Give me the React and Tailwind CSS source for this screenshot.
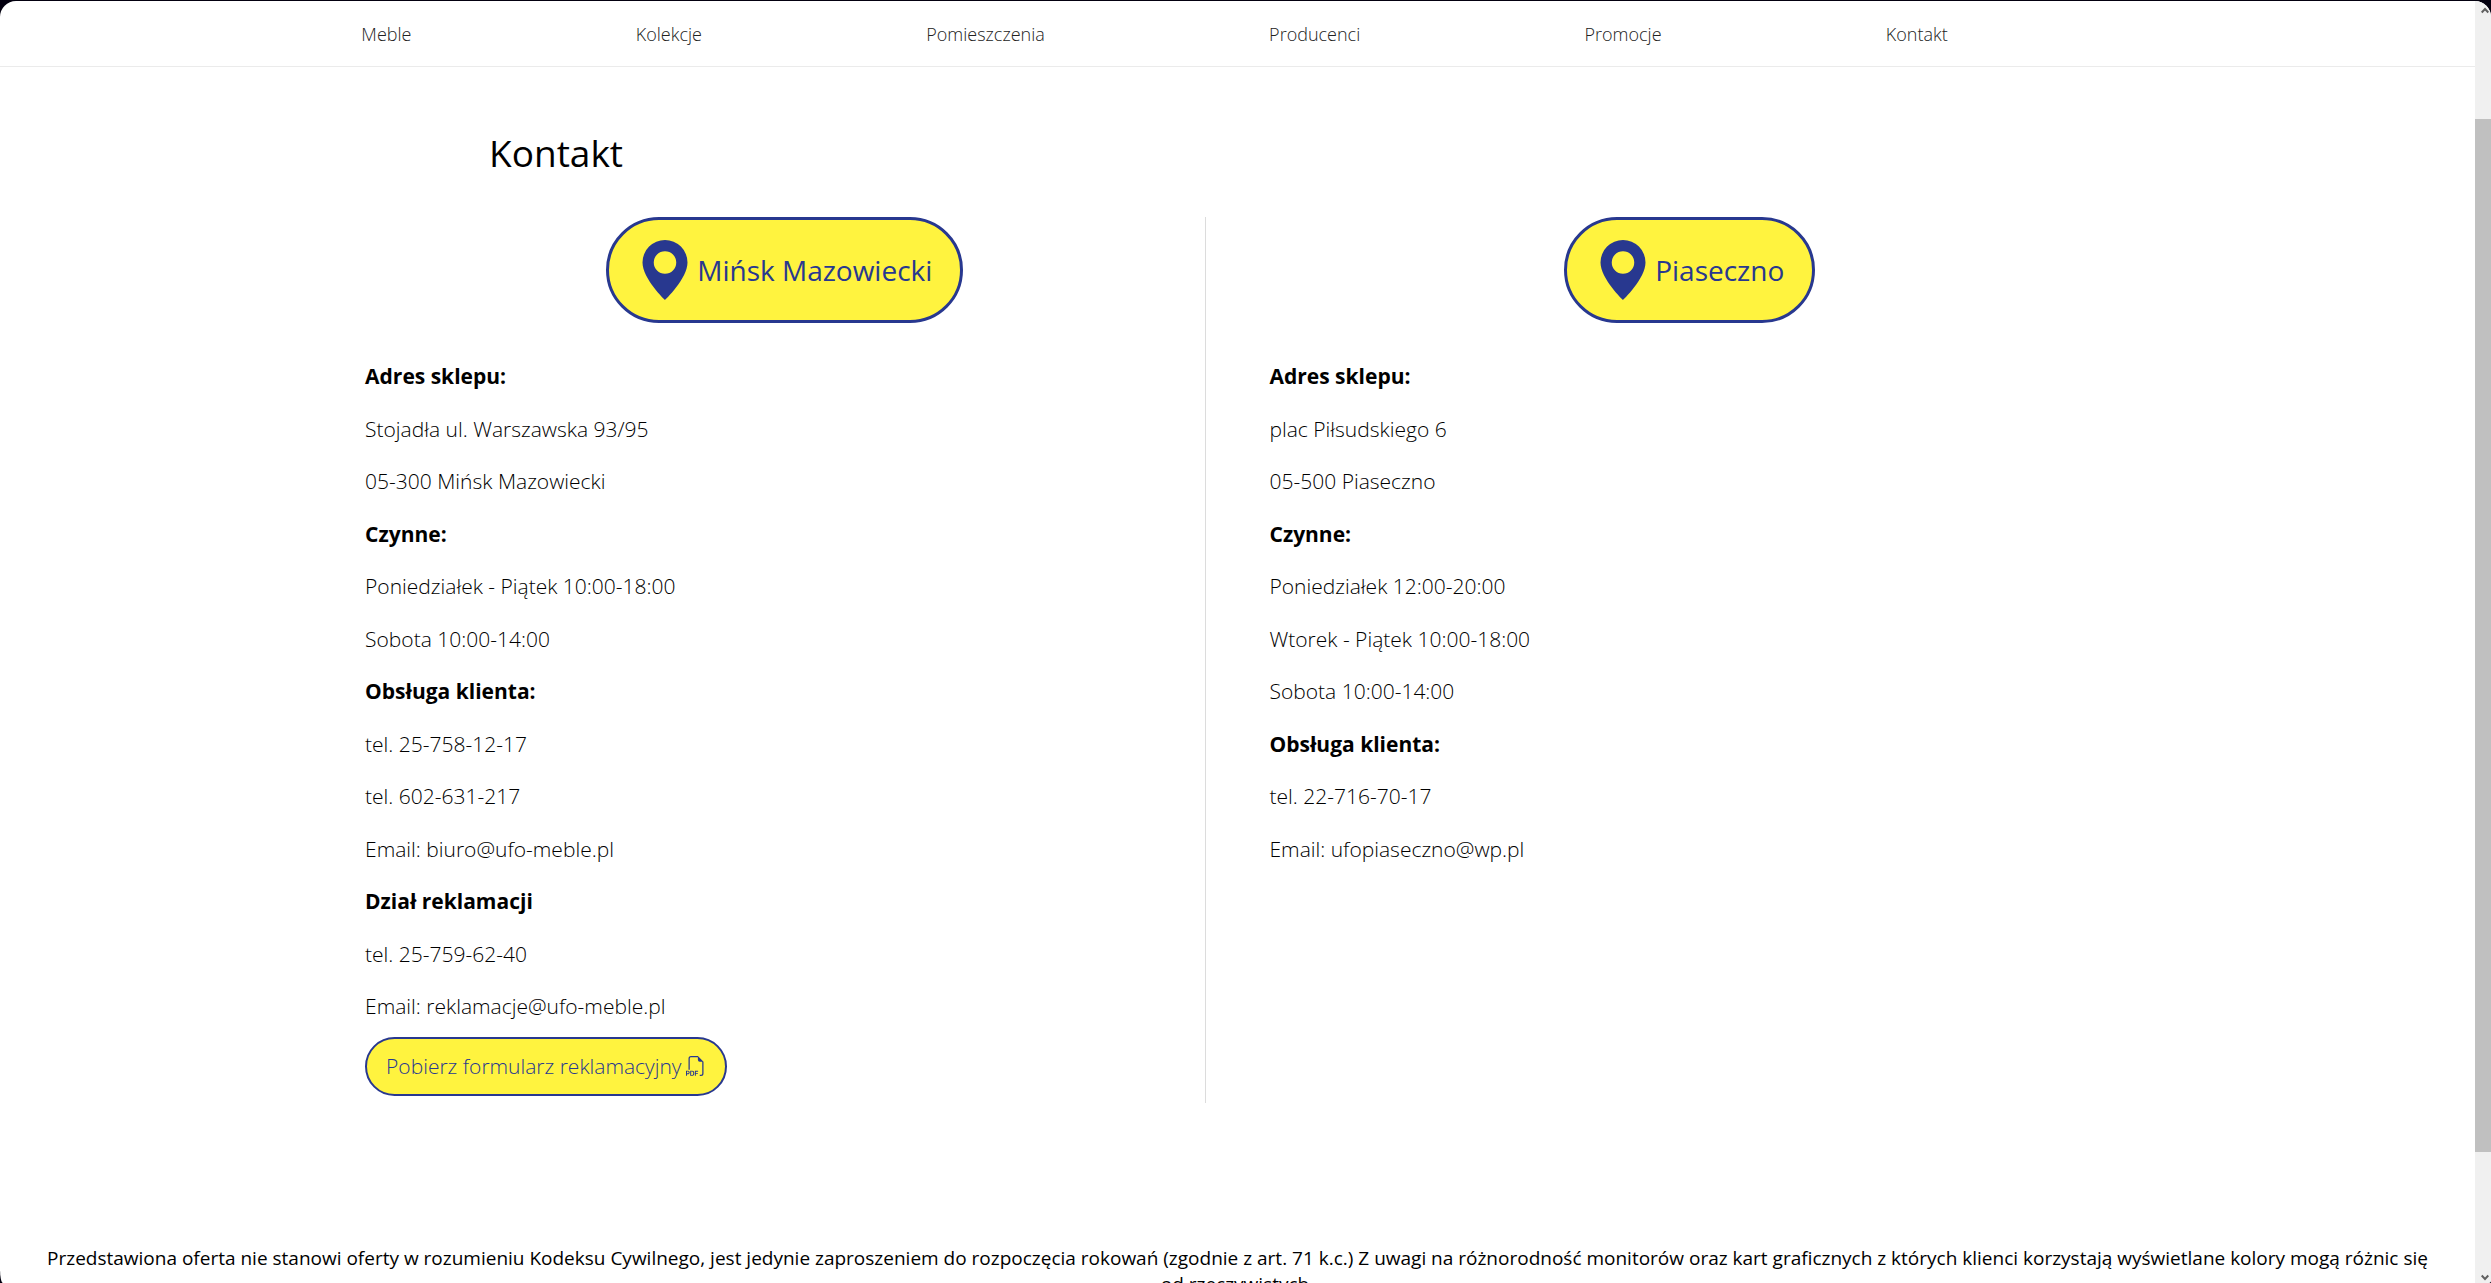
import { BsFiletypePdf, BsGeoAltFill } from "react-icons/bs";

const NAV = ["Meble", "Kolekcje", "Pomieszczenia", "Producenci", "Promocje", "Kontakt"];

const MINSK = [
  {
    title: "Adres sklepu:",
    lines: ["Stojadła ul. Warszawska 93/95", "05-300 Mińsk Mazowiecki"],
  },
  {
    title: "Czynne:",
    lines: ["Poniedziałek - Piątek 10:00-18:00", "Sobota 10:00-14:00"],
  },
  {
    title: "Obsługa klienta:",
    lines: ["tel. 25-758-12-17", "tel. 602-631-217", "Email: biuro@ufo-meble.pl"],
  },
  {
    title: "Dział reklamacji",
    lines: ["tel. 25-759-62-40", "Email: reklamacje@ufo-meble.pl"],
  },
];

const PIASECZNO = [
  {
    title: "Adres sklepu:",
    lines: ["plac Piłsudskiego 6", "05-500 Piaseczno"],
  },
  {
    title: "Czynne:",
    lines: [
      "Poniedziałek 12:00-20:00",
      "Wtorek - Piątek 10:00-18:00",
      "Sobota 10:00-14:00",
    ],
  },
  {
    title: "Obsługa klienta:",
    lines: ["tel. 22-716-70-17", "Email: ufopiaseczno@wp.pl"],
  },
];

function LocationLink({ children }) {
  return (
    <a
      href="#mapa"
      className="flex items-center self-center rounded-full border-3 border-[#28388f] bg-[#fff33f] px-[26px] py-5 text-[28px] text-[#28388f]"
    >
      <BsGeoAltFill className="size-15" aria-hidden="true" />
      <span className="px-0.5">{children}</span>
    </a>
  );
}

function Store({ name, sections, children, className }) {
  return (
    <section className={className}>
      <LocationLink>{name}</LocationLink>
      <div className="mt-[38px] flex flex-col gap-[21px] text-[21px] leading-normal">
        {sections.map((section) => (
          <div key={section.title} className="flex flex-col gap-[21px]">
            <h2 className="font-bold">{section.title}</h2>
            {section.lines.map((line) => (
              <p key={line} className="font-light">
                {line}
              </p>
            ))}
          </div>
        ))}
      </div>
      {children}
    </section>
  );
}

function ScrollArrow({ d }) {
  return (
    <svg viewBox="0 0 8 7" className="h-[7px] w-2" fill="none" stroke="#606060" strokeWidth="2">
      <path d={d} />
    </svg>
  );
}

function Scrollbar() {
  return (
    <div aria-hidden="true" className="flex w-4 shrink-0 flex-col items-end bg-[#f0f0f0]">
      <div className="flex h-[9.2%] w-full items-start justify-end pt-1.5 pr-0.5">
        <ScrollArrow d="M0.7 5.5 4 2 7.3 5.5" />
      </div>
      <div className="w-full grow bg-[#c0c0c0]" />
      <div className="flex h-[10.2%] w-full items-end justify-end pr-0.5 pb-0.5">
        <ScrollArrow d="M0.7 1.5 4 5 7.3 1.5" />
      </div>
    </div>
  );
}

export default function App() {
  return (
    <div className="h-screen bg-[#03000f] pt-px font-['Open_Sans','Noto_Sans',sans-serif] text-black">
      <div className="flex h-full overflow-hidden rounded-t-2xl rounded-br-[3px] rounded-bl-[3px_14px] bg-white">
        <div className="min-w-0 grow overflow-hidden">
          <nav className="border-b border-[#ebebeb] pr-[21.3%] pl-[14.6%]">
            <ul className="flex h-[65px] items-center justify-between pt-0.5 text-[18px] font-light text-[#222]">
              {NAV.map((item) => (
                <li key={item}>
                  <a href={"#" + item.toLowerCase()}>{item}</a>
                </li>
              ))}
            </ul>
          </nav>

          <main className="mx-auto w-[70.5%]">
            <h1 className="mt-[60px] ml-[124px] text-[37px] leading-[52px]">Kontakt</h1>
            <div className="mt-[38px] grid grid-cols-2 gap-16">
              <Store
                name="Mińsk Mazowiecki"
                sections={MINSK}
                className="flex flex-col border-r border-[#dcdcdc] pb-[7px]"
              >
                <a
                  href="#formularz"
                  className="mt-3.5 flex items-center gap-1 self-start rounded-full border-2 border-[#28388f] bg-[#fff33f] px-[19px] py-3 text-[21px] leading-normal font-light text-[#28388f]"
                >
                  Pobierz formularz reklamacyjny
                  <BsFiletypePdf className="size-5" aria-hidden="true" />
                </a>
              </Store>
              <Store name="Piaseczno" sections={PIASECZNO} className="flex flex-col" />
            </div>
          </main>

          <footer className="mt-[142px] px-10 text-center text-[19px] leading-[26px]">
            Przedstawiona oferta nie stanowi oferty w rozumieniu Kodeksu Cywilnego, jest jedynie
            zaproszeniem do rozpoczęcia rokowań (zgodnie z art. 71 k.c.) Z uwagi na różnorodność
            monitorów oraz kart graficznych z których klienci korzystają wyświetlane kolory mogą
            różnic się od rzeczywistych.
          </footer>
        </div>
        <Scrollbar />
      </div>
    </div>
  );
}
